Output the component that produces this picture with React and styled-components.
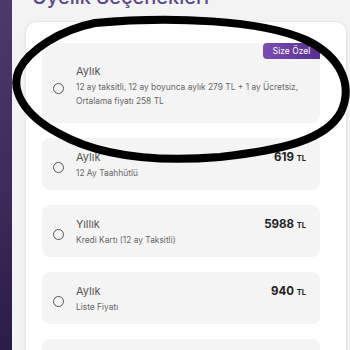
import styled, { createGlobalStyle } from 'styled-components'

const GlobalStyle = createGlobalStyle`
  html, body {
    margin: 0;
    padding: 0;
    background: #f3f3f3;
    font-family: Inter, "Noto Sans", sans-serif;
    overflow: hidden;
  }
`

const plans = [
  {
    title: 'Aylık',
    desc: ['12 ay taksitli, 12 ay boyunca aylık 279 TL + 1 ay Ücretsiz,', 'Ortalama fiyatı 258 TL'],
    badge: 'Size Özel'
  },
  { title: 'Aylık', desc: ['12 Ay Taahhütlü'], price: '619' },
  { title: 'Yıllık', desc: ['Kredi Kartı (12 ay Taksitli)'], price: '5988' },
  { title: 'Aylık', desc: ['Liste Fiyatı'], price: '940' },
  { title: 'Aylık', desc: ['Taahhütsüz'], price: '999' }
]

const App = () => {
  return (
    <>
      <GlobalStyle />
      <StyledPage>
        <StyledSidebar />
        <StyledMain>
          <StyledHeading>Üyelik Seçenekleri</StyledHeading>
          <StyledPanel>
            {plans.map((plan, i) => (
              <StyledOption key={i} $featured={!!plan.badge}>
                {plan.badge && <StyledBadge>{plan.badge}</StyledBadge>}
                <StyledRadio />
                <StyledInfo>
                  <StyledTitle>{plan.title}</StyledTitle>
                  {plan.desc.map((line) => (
                    <StyledDesc key={line}>{line}</StyledDesc>
                  ))}
                </StyledInfo>
                {plan.price && (
                  <StyledPrice>
                    {plan.price} <small>TL</small>
                  </StyledPrice>
                )}
              </StyledOption>
            ))}
          </StyledPanel>
        </StyledMain>
      </StyledPage>

      <StyledMark viewBox='0 0 350 350'>
        <path
          d='M 95 23 C 170 16, 262 20, 306 40 C 342 57, 353 86, 341 112 C 326 140, 282 150, 220 157 C 160 162, 100 157, 58 133 C 24 115, 10 90, 19 70 C 29 50, 60 30, 95 23 Z'
          fill='none'
          stroke='#000'
          strokeWidth='8'
          strokeLinejoin='round'
        />
      </StyledMark>
    </>
  )
}

const StyledPage = styled.div`
  display: flex;
  height: 350px;
  overflow: hidden;
`

const StyledSidebar = styled.div`
  width: 12px;
  flex-shrink: 0;
  background: linear-gradient(180deg, #4d3a6b 0%, #3f2c5e 50%, #2b1b47 100%);
`

const StyledMain = styled.div`
  flex: 1;
  padding-left: 14px;
  padding-right: 4px;
`

const StyledHeading = styled.h1`
  margin: -15px 0 0 6px;
  font-size: 20px;
  line-height: 24px;
  font-weight: 500;
  color: #5a4a8a;
`

const StyledPanel = styled.div`
  margin-top: 13px;
  background: #fff;
  border-radius: 10px;
  box-shadow: 0 0 0 1px #e6e6e6, 0 1px 4px rgba(0, 0, 0, 0.08);
  padding: 21px 26px 0 16px;
  display: flex;
  flex-direction: column;
  gap: 15px;
`

const StyledOption = styled.div`
  position: relative;
  display: flex;
  align-items: center;
  background: #f4f4f4;
  border-radius: 8px;
  padding: ${({ $featured }) => ($featured ? '21px 14px 15px 10px' : '12px 14px 10px 10px')};
  min-height: ${({ $featured }) => ($featured ? '44px' : '30px')};
`

const StyledBadge = styled.div`
  position: absolute;
  top: 0;
  right: 0;
  width: 57px;
  height: 16px;
  display: flex;
  align-items: center;
  justify-content: center;
  background: linear-gradient(90deg, #7c4cb3 0%, #55308f 100%);
  color: #fff;
  font-size: 8.5px;
  border-radius: 4px 8px 0 4px;
`

const StyledRadio = styled.span`
  width: 9px;
  height: 9px;
  border: 1.6px solid #555;
  border-radius: 50%;
  flex-shrink: 0;
  margin: 4px 12px 0 1px;
`

const StyledInfo = styled.div`
  flex: 1;
  display: flex;
  flex-direction: column;
`

const StyledTitle = styled.div`
  font-size: 11px;
  line-height: 14px;
  color: #555;
  margin-bottom: 2px;
`

const StyledDesc = styled.div`
  font-size: 8.4px;
  line-height: 14px;
  color: #666;
  white-space: nowrap;
`

const StyledPrice = styled.div`
  align-self: flex-start;
  font-size: 11.5px;
  line-height: 14px;
  font-weight: 700;
  color: #222;

  small {
    font-size: 7.5px;
    font-weight: 700;
  }
`

const StyledMark = styled.svg`
  position: fixed;
  top: 0;
  left: 0;
  width: 350px;
  height: 350px;
  pointer-events: none;
`

export default App
